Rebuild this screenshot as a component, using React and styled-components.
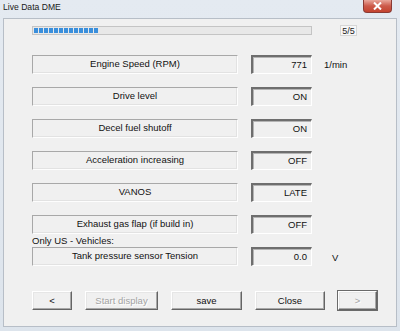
import React from 'react'
import styled, { createGlobalStyle } from 'styled-components'

const GlobalStyle = createGlobalStyle`
  html, body {
    margin: 0;
    padding: 0;
    background: #dfe6ee;
  }
  body {
    font-family: "Liberation Sans", Arial, sans-serif;
  }
`;

const Frame = styled.div`
  width: 400px;
  height: 331px;
  box-sizing: border-box;
  background: linear-gradient(#e4eaf1, #dde4ec);
  display: flex;
  flex-direction: column;
`;

const TitleBar = styled.div`
  height: 18px;
  display: flex;
  align-items: flex-start;
  justify-content: space-between;
  padding: 0 8px 0 3px;
`;

const Title = styled.span`
  font-size: 8.6px;
  line-height: 15px;
  color: #1a1a1a;
`;

const CloseBtn = styled.div`
  width: 29px;
  height: 13px;
  box-sizing: border-box;
  border: 1px solid #8a3a33;
  border-top: none;
  border-radius: 0 0 4px 4px;
  background: linear-gradient(#e9a79b, #cc5a4a 50%, #c4432f);
  display: flex;
  align-items: center;
  justify-content: center;
`;

const Client = styled.div`
  flex: 1;
  margin: 0 3px 4px 3px;
  background: #f0f0f0;
  border: 1px solid #b7bec7;
  padding: 6px 0 0 28px;
`;

const ProgressRow = styled.div`
  display: flex;
  align-items: center;
  height: 11px;
`;

const Progress = styled.div`
  width: 280px;
  height: 9px;
  box-sizing: border-box;
  border: 1px solid #c4c4c4;
  background: #e8e8e8;
  padding: 1px;
`;

const ProgressFill = styled.div`
  height: 100%;
  background: repeating-linear-gradient(90deg, #3a8fdc 0 4px, transparent 4px 5px);
`;

const Counter = styled.div`
  margin-left: 28px;
  width: 17px;
  height: 11px;
  box-sizing: border-box;
  border: 1px solid #d6d6d6;
  background: #f7f7f7;
  font-size: 9px;
  line-height: 10px;
  text-align: center;
  color: #222;
`;

const List = styled.div`
  margin-top: 19px;
  display: flex;
  flex-direction: column;
  gap: 13px;
`;

const Row = styled.div`
  display: flex;
  align-items: center;
  height: 19px;
`;

const Label = styled.div`
  width: 206px;
  height: 19px;
  box-sizing: border-box;
  border-top: 1px solid #a8a8a8;
  border-left: 1px solid #a8a8a8;
  border-bottom: 1px solid #fdfdfd;
  border-right: 1px solid #fdfdfd;
  box-shadow: inset 0 -1px 0 #e2e2e2, inset -1px 0 0 #e2e2e2;
  font-size: 9.5px;
  line-height: 16px;
  text-align: center;
  color: #111;
`;

const Value = styled.div`
  margin-left: 13px;
  width: 61px;
  height: 19px;
  box-sizing: border-box;
  border-top: 2px solid #6e6e6e;
  border-left: 2px solid #6e6e6e;
  border-bottom: 1px solid #fff;
  border-right: 1px solid #fff;
  box-shadow: inset 1px 1px 0 #b4b4b4;
  padding-right: 4px;
  font-size: 9.5px;
  line-height: 16px;
  text-align: right;
  color: #111;
`;

const Unit = styled.span`
  margin-left: ${p => p.$indent}px;
  font-size: 9.5px;
  color: #111;
  align-self: ${p => (p.$low ? 'flex-end' : 'center')};
  padding-bottom: ${p => (p.$low ? '3px' : '0')};
`;

const Note = styled.div`
  height: 13px;
  font-size: 9.5px;
  line-height: 13px;
  color: #111;
`;

const ButtonBar = styled.div`
  margin-top: 25px;
  display: flex;
  gap: 13px;
`;

const Button = styled.div`
  width: ${p => p.$w}px;
  height: 19px;
  box-sizing: border-box;
  background: #f0f0f0;
  border-top: 1px solid #fff;
  border-left: 1px solid #fff;
  border-bottom: 1px solid #646464;
  border-right: 1px solid #646464;
  box-shadow: inset -1px -1px 0 #a8a8a8, inset 1px 1px 0 #e6e6e6;
  outline: ${p => (p.$focus ? '1px solid #6a6a6a' : 'none')};
  font-size: 9.5px;
  line-height: 17px;
  text-align: center;
  color: ${p => (p.$disabled ? '#a3a3a3' : '#111')};
  text-shadow: ${p => (p.$disabled ? '1px 1px 0 #fff' : 'none')};
`;

const rows = [
  { label: 'Engine Speed (RPM)', value: '771', unit: '1/min' },
  { label: 'Drive level', value: 'ON' },
  { label: 'Decel fuel shutoff', value: 'ON' },
  { label: 'Acceleration increasing', value: 'OFF' },
  { label: 'VANOS', value: 'LATE' },
  { label: 'Exhaust gas flap (if build in)', value: 'OFF' },
];

const App = () => {
  return (
    <>
      <GlobalStyle />
      <Frame>
        <TitleBar>
          <Title>Live Data DME</Title>
          <CloseBtn>
            <svg width="9" height="8" viewBox="0 0 9 8">
              <path d="M1 0.5 L8 7.5 M8 0.5 L1 7.5" stroke="#fff" strokeWidth="2" />
            </svg>
          </CloseBtn>
        </TitleBar>
        <Client>
          <ProgressRow>
            <Progress>
              <ProgressFill style={{ width: 64 }} />
            </Progress>
            <Counter>5/5</Counter>
          </ProgressRow>
          <List>
            {rows.map(r => (
              <Row key={r.label}>
                <Label>{r.label}</Label>
                <Value>{r.value}</Value>
                {r.unit && <Unit $indent={12}>{r.unit}</Unit>}
              </Row>
            ))}
          </List>
          <Note>Only US - Vehicles:</Note>
          <Row>
            <Label>Tank pressure sensor Tension</Label>
            <Value>0.0</Value>
            <Unit $indent={20} $low>V</Unit>
          </Row>
          <ButtonBar>
            <Button $w={40}>&lt;</Button>
            <Button $w={73} $disabled>Start display</Button>
            <Button $w={71}>save</Button>
            <Button $w={70}>Close</Button>
            <Button $w={39} $disabled $focus>&gt;</Button>
          </ButtonBar>
        </Client>
      </Frame>
    </>
  )
}

export default App
